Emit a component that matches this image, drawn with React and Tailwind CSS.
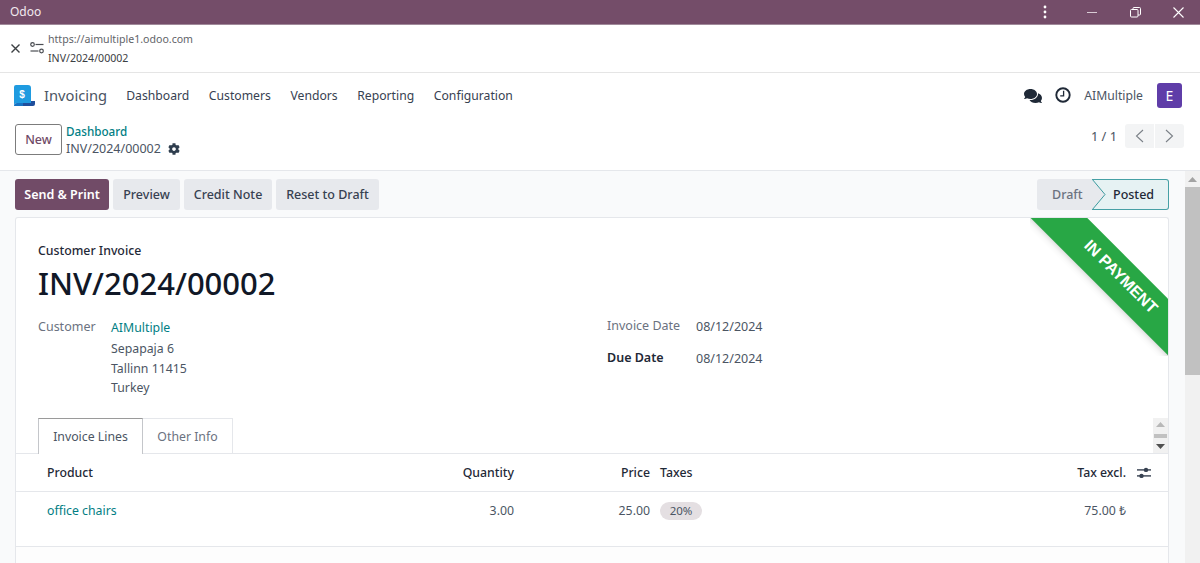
import React from "react";
import { FaComments, FaCog } from "react-icons/fa";

const Logo = () => (
  <svg width="22" height="22" viewBox="0 0 22 22">
    <path d="M4 16 L21 16 L21 19 Q21 21 19 21 L3 21 Z" fill="#1f4e9c" />
    <path d="M2 0 H14 Q17 0 17 3 V18 H3 Q0 18 0 21 V2 Q0 0 2 0 Z" fill="#1f9be0" />
    <path d="M0 21 Q0 18 3 18 H9 V21 Z" fill="#1673c4" />
    <text x="8" y="12.5" fontSize="10" fontWeight="700" fill="#fff" textAnchor="middle" fontFamily="Liberation Sans, sans-serif">$</text>
  </svg>
);

const Tune = ({ className }) => (
  <svg className={className} width="14" height="12" viewBox="0 0 14 12" fill="none" stroke="#4a4d52" strokeWidth="1.2">
    <circle cx="2.5" cy="2.5" r="1.8" />
    <path d="M5.5 2.5 H13.5" />
    <circle cx="11.5" cy="9" r="1.8" />
    <path d="M0.5 9 H8.5" />
  </svg>
);

const Sliders = () => (
  <svg width="14" height="12" viewBox="0 0 14 12" fill="#374151">
    <rect x="0" y="2.2" width="14" height="1.4" />
    <circle cx="9" cy="2.9" r="2.2" />
    <rect x="0" y="8.2" width="14" height="1.4" />
    <circle cx="4.5" cy="8.9" r="2.2" />
  </svg>
);

const Clock = ({ className }) => (
  <svg className={className} width="16" height="16" viewBox="0 0 16 16" fill="none" stroke="#1f2937">
    <circle cx="8" cy="8" r="6.7" strokeWidth="1.9" />
    <path d="M8.6 3.8 V8.8 H5.2" strokeWidth="1.3" />
  </svg>
);

const Cols = "grid grid-cols-[367px_100px_136px_376px_100px_42px] pl-[31px] items-center";

export default function App() {
  return (
    <div className="h-[563px] w-[1200px] overflow-hidden flex flex-col bg-white text-[#4b5563] text-[12.3px] font-['Noto_Sans','Open_Sans',sans-serif]">
      {/* title bar */}
      <div className="h-[25px] shrink-0 bg-[#744d69] border-b border-[#a08a9a] flex items-center pl-[10px] text-[12px] text-[#f1e9ef]">
        <span>Odoo</span>
        <div className="ml-auto flex items-center">
          <svg width="4" height="14" viewBox="0 0 4 14" fill="#fff" className="mr-[40px]">
            <circle cx="2" cy="2" r="1.4" /><circle cx="2" cy="7" r="1.4" /><circle cx="2" cy="12" r="1.4" />
          </svg>
          <div className="w-[10px] h-px bg-[#d9ccd5] mr-[33px]" />
          <svg width="11" height="11" viewBox="0 0 11 11" fill="none" stroke="#fff" strokeWidth="1" className="mr-[32px]">
            <rect x="0.5" y="2.5" width="7.5" height="7.5" rx="1" />
            <path d="M3 2.5 V1.5 Q3 .5 4 .5 H9.5 Q10.5 .5 10.5 1.5 V7 Q10.5 8 9.5 8 H8" />
          </svg>
          <svg width="11" height="11" viewBox="0 0 11 11" stroke="#fff" strokeWidth="1.1" className="mr-[16px]">
            <path d="M.5 .5 L10.5 10.5 M10.5 .5 L.5 10.5" />
          </svg>
        </div>
      </div>
      {/* url bar */}
      <div className="h-[48px] shrink-0 border-b border-[#e5e5e5] flex items-center pl-[11px]">
        <svg width="9" height="9" viewBox="0 0 9 9" stroke="#3c4043" strokeWidth="1.4">
          <path d="M.5 .5 L8.5 8.5 M8.5 .5 L.5 8.5" />
        </svg>
        <Tune className="ml-[10px] -mt-[1px]" />
        <div className="ml-[4px] flex flex-col gap-[2px] text-[10.6px] leading-[17px] text-[#5f6368]">
          <span>https://aimultiple1.odoo.com</span>
          <span className="text-[#3c4043]">INV/2024/00002</span>
        </div>
      </div>
      {/* nav */}
      <div className="h-[45px] shrink-0 flex items-center pl-[14px] pr-[18px]">
        <Logo />
        <span className="ml-[8px] text-[14.7px] text-[#4b5563]">Invoicing</span>
        <nav className="ml-[19px] pt-[1px] flex gap-[19.6px] text-[12.2px] text-[#374151]">
          <span>Dashboard</span><span>Customers</span><span>Vendors</span><span>Reporting</span><span>Configuration</span>
        </nav>
        <div className="ml-auto flex items-center">
          <FaComments className="text-[#1f2937] text-[18px]" />
          <Clock className="ml-[13px] -mt-[2px]" />
          <span className="ml-[13px] pt-[1px] text-[12.2px] text-[#4b5563]">AIMultiple</span>
          <div className="ml-[14px] w-[25px] h-[25px] rounded-[3px] bg-[#5f3da8] text-white flex items-center justify-center text-[14px]">E</div>
        </div>
      </div>
      {/* control panel */}
      <div className="h-[53px] shrink-0 border-b border-[#e5e7eb] flex items-start pl-[15px] pr-[16px] pt-[6px]">
        <button className="w-[47px] h-[31px] pt-[2px] rounded-[3px] border border-[#7c7c7c] text-[#714b67] flex items-center justify-center text-[12.5px] font-medium">New</button>
        <div className="ml-[4px] -mt-[1px] flex flex-col leading-[17px]">
          <span className="text-[#017e84] text-[11.7px] font-medium">Dashboard</span>
          <div className="flex items-center gap-[7px] text-[12.5px] text-[#4b5563]">
            <span>INV/2024/00002</span>
            <FaCog className="text-[#2f3e4e] text-[12px]" />
          </div>
        </div>
        <div className="ml-auto flex items-center">
          <span className="text-[12.8px] pt-[1px] text-[#4b5563] mr-[8px]">1 / 1</span>
          <div className="h-[24px] w-[59px] flex rounded-[3px] bg-[#f3f4f5] divide-x divide-white">
            <div className="flex-1 flex items-center justify-center">
              <svg width="9" height="14" viewBox="0 0 9 14" fill="none" stroke="#7b8087" strokeWidth="1.1"><path d="M8 1 L1.5 7 L8 13" /></svg>
            </div>
            <div className="flex-1 flex items-center justify-center">
              <svg width="9" height="14" viewBox="0 0 9 14" fill="none" stroke="#7b8087" strokeWidth="1.1"><path d="M1 1 L7.5 7 L1 13" /></svg>
            </div>
          </div>
        </div>
      </div>
      {/* content */}
      <div className="flex-1 min-h-0 flex">
        <div className="flex-1 min-w-0 bg-[#f9fafb] pl-[15px] pr-[16px] pt-[8px] flex flex-col">
          <div className="h-[31px] shrink-0 flex items-center text-[12.5px] font-medium">
            <button className="h-full w-[94px] pt-[2px] rounded-[3px] bg-[#714b67] text-white mr-[4px] font-semibold">Send & Print</button>
            <button className="h-full w-[67px] pt-[2px] rounded-[3px] bg-[#e7e9ed] text-[#374151] mr-[4px]">Preview</button>
            <button className="h-full w-[88px] pt-[2px] rounded-[3px] bg-[#e7e9ed] text-[#374151] mr-[4px]">Credit Note</button>
            <button className="h-full w-[103px] pt-[2px] rounded-[3px] bg-[#e7e9ed] text-[#374151]">Reset to Draft</button>
            <div className="ml-auto h-full w-[132px] flex relative">
              <div className="w-[56px] h-full pt-[2px] bg-[#e7e9ed] rounded-l-[3px] flex items-center pl-[15px] text-[#6b7280]">Draft</div>
              <div className="flex-1 h-full pt-[2px] bg-[#e6f2f3] border-y border-r border-[#017e84]/70 rounded-r-[3px] flex items-center pl-[20px] text-[#1f2937]">Posted</div>
              <svg className="absolute left-[55px] top-0" width="14" height="31" viewBox="0 0 14 31">
                <path d="M0 0 L13 15.5 L0 31 Z" fill="#e7e9ed" />
                <path d="M0 0 L13 15.5 L0 31" fill="none" stroke="#3b9a9e" strokeWidth="1" />
              </svg>
            </div>
          </div>
          <div className="mt-[7px] flex-1 bg-white border border-b-0 border-[#e5e7eb] rounded-t-[3px] relative flex flex-col">
            <div className="absolute top-0 right-0 w-[138px] h-[138px] overflow-hidden">
              <div className="absolute left-[-20px] top-[41px] w-[220px] h-[40px] pb-[5px] pr-[2px] rotate-45 bg-[#28a745] text-white flex items-center justify-center text-[16px] font-bold font-['Liberation_Sans',sans-serif] shadow-md">IN PAYMENT</div>
            </div>
            <div className="pl-[22px] pt-[24px]">
              <div className="text-[#1f2937] leading-[17px] font-medium">Customer Invoice</div>
              <h1 className="mt-[5px] text-[31px] leading-[38px] font-medium text-[#111827]">INV/2024/00002</h1>
              <div className="mt-[15px] flex h-[85px]">
                <div className="w-[569px] flex">
                  <div className="w-[73px] text-[12.5px] text-[#6b7280] leading-[20px]">Customer</div>
                  <div className="leading-[20px] text-[#4b5563] pt-[1px]">
                    <div className="text-[#017e84]">AIMultiple</div>
                    <div className="mt-[1px]">Sepapaja 6</div>
                    <div>Tallinn 11415</div>
                    <div className="-mt-[1px]">Turkey</div>
                  </div>
                </div>
                <div className="-mt-[1px] grid grid-cols-[89px_auto] grid-rows-[32px_20px] items-start text-[12.5px] leading-[20px]">
                  <span className="text-[#6b7280]">Invoice Date</span>
                  <span className="pt-[1px]">08/12/2024</span>
                  <span className="text-[#1f2937] font-semibold">Due Date</span>
                  <span className="pt-[1px]">08/12/2024</span>
                </div>
              </div>
            </div>
            <div className="mt-[16px] h-[36px] shrink-0 border-b border-[#e5e7eb] flex pl-[22px]">
              <div className="h-[36px] w-[105px] pt-[2px] border border-b-0 border-[#c4c6ca] border-t-[#9a9a9a] bg-white flex items-center justify-center text-[#4b5563]">Invoice Lines</div>
              <div className="h-[35px] w-[90px] pt-[2px] border-t border-r border-[#e5e7eb] flex items-center justify-center text-[#6b7280]">Other Info</div>
              <div className="ml-auto w-[15px] h-[35px] bg-[#f1f1f1] flex flex-col items-center justify-between py-[4px]">
                <svg width="9" height="5" viewBox="0 0 9 5" fill="#b8b8b8"><path d="M4.5 0 L9 5 H0 Z" /></svg>
                <div className="w-[13px] h-[4px] bg-[#c1c1c1]" />
                <svg width="9" height="5" viewBox="0 0 9 5" fill="#505050"><path d="M4.5 5 L9 0 H0 Z" /></svg>
              </div>
            </div>
            <div className={`${Cols} h-[38px] pt-[2px] shrink-0 border-b border-[#e5e7eb] text-[#1f2937] font-medium`}>
              <span>Product</span>
              <span className="text-right">Quantity</span>
              <span className="text-right">Price</span>
              <span className="pl-[10px]">Taxes</span>
              <span className="text-right">Tax excl.</span>
              <span className="pl-[11px] flex -mt-[2px]"><Sliders /></span>
            </div>
            <div className={`${Cols} h-[55px] shrink-0 border-b border-[#e5e7eb] items-start pt-[10px]`}>
              <span className="text-[#017e84]">office chairs</span>
              <span className="text-right">3.00</span>
              <span className="text-right">25.00</span>
              <span className="pl-[10px]"><span className="inline-flex items-center justify-center w-[42px] h-[18px] rounded-full bg-[#e4dfe2] text-[11.5px] text-[#4b5563]">20%</span></span>
              <span className="text-right">75.00 ₺</span>
            </div>
            <div className="flex-1 bg-[#fdfdfd]" />
          </div>
        </div>
        <div className="w-[15px] shrink-0 bg-[#f1f1f1] flex flex-col items-center pt-[6px]">
          <svg width="9" height="5" viewBox="0 0 9 5" fill="#a3a3a3"><path d="M4.5 0 L9 5 H0 Z" /></svg>
          <div className="mt-[5px] w-full h-[188px] bg-[#c1c1c1]" />
        </div>
      </div>
    </div>
  );
}
